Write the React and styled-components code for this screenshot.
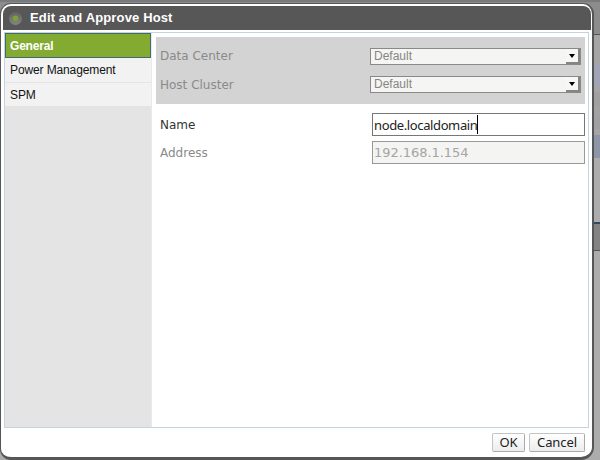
import React from "react";
import styled, { createGlobalStyle } from "styled-components";

const Global = createGlobalStyle`
  * { box-sizing: border-box; }
  body { margin: 0; overflow: hidden; background: #aaa; }
`;

const Stage = styled.div`
  position: relative;
  width: 600px;
  height: 460px;
  overflow: hidden;
`;

const Backdrop = styled.div`
  display: flex;
  flex-direction: column;
  height: 460px;
  background: #acacac;
`;

const Strip = styled.div`
  flex: 0 0 ${(p) => p.$h}px;
  background: ${(p) => p.$c};
`;

const Dialog = styled.section`
  position: absolute;
  left: 0;
  top: 3px;
  width: 594px;
  height: 457px;
  display: flex;
  flex-direction: column;
  padding: 2px 1px 0 2px;
  background: #fff;
  border: solid #565656;
  border-width: 1px 2px 3px 1px;
  border-radius: 11px 11px 13px 11px;
`;

const Header = styled.header`
  flex: 0 0 24px;
  display: flex;
  align-items: center;
  gap: 8px;
  padding-left: 6px;
  border-radius: 8px 8px 0 0;
  background: #575757;
  color: #fff;
  font: bold 13px/24px "Liberation Sans", sans-serif;
  letter-spacing: 0.14px;
`;

const Body = styled.div`
  display: flex;
  height: 396px;
  margin: 2px 2px 0 1px;
  border: 1px solid #c5d3db;
`;

const Sidebar = styled.nav`
  flex: 0 0 147px;
  background: #e4e4e4;
  border-right: 1px solid #e9e9e9;
`;

const Tab = styled.div`
  height: ${(p) => (p.$active ? 25 : 24.5)}px;
  padding-left: ${(p) => (p.$active ? 4 : 5)}px;
  border: ${(p) => (p.$active ? "1px solid #3f6a6e" : "0 solid #e4e4e4")};
  border-bottom-width: 1px;
  background: ${(p) => (p.$active ? "#83aa31" : "#f2f2f2")};
  color: ${(p) => (p.$active ? "#fff" : "#111")};
  font: ${(p) => (p.$active ? "bold" : "normal")} 12px/24px "Liberation Sans", sans-serif;
  letter-spacing: ${(p) => (p.$active ? -0.2 : -0.12)}px;
`;

const Content = styled.main`
  flex: 1;
  padding: 4px 3px 0 4px;
`;

const Group = styled.div`
  height: 67px;
  padding: 5px 4px 0 4px;
  background: #d3d3d3;
`;

const Fields = styled.div`
  padding: 7px 0 0 4px;
`;

const Row = styled.div`
  display: flex;
  align-items: flex-start;
  justify-content: space-between;
  height: 28px;
  padding-top: 6px;

  ${Fields} & { padding-top: 2px; }
`;

const Label = styled.label`
  margin-top: ${(p) => p.$drop}px;
  color: ${(p) => (p.$strong ? "#333" : "#8a8a8a")};
  font: 12px/16px "DejaVu Sans", sans-serif;
`;

const Select = styled.div`
  display: flex;
  justify-content: space-between;
  width: 211px;
  height: 17px;
  padding-left: 3px;
  border: 1px solid #898989;
  background: #f5f5f3;
  color: #858585;
  font: 12px/15px "Liberation Sans", sans-serif;
`;

const Arrow = styled.span`
  display: flex;
  align-items: center;
  justify-content: center;
  width: 14px;
  height: 15px;
  border: solid #858585;
  border-width: 0 2px 2px 0;
  background: #f7f7f5;
`;

const Field = styled.div`
  display: flex;
  align-items: center;
  width: 213px;
  height: 23px;
  padding-left: 1px;
  border: 1px solid ${(p) => (p.$disabled ? "#999" : "#777")};
  background: ${(p) => (p.$disabled ? "#f4f4f3" : "#fff")};
  color: ${(p) => (p.$disabled ? "#a5a5a5" : "#222")};
  font: 13px/20px ${(p) => (p.$disabled ? '"DejaVu Sans"' : '"Noto Sans"')}, sans-serif;
  letter-spacing: ${(p) => (p.$disabled ? -0.05 : -0.38)}px;
`;

const Caret = styled.i`
  width: 1px;
  height: 19px;
  background: #000;
`;

const Footer = styled.footer`
  display: flex;
  justify-content: flex-end;
  gap: 4px;
  padding: 5px 6px 0 0;
`;

const Button = styled.button`
  width: ${(p) => p.$w}px;
  height: 19px;
  padding: 0;
  border: 1px solid #c4c4c4;
  border-right-color: #aaa;
  border-bottom-color: #aaa;
  border-radius: 2px;
  background: linear-gradient(#fff, #ececec);
  color: #222;
  font: 13px/15px "Noto Sans", sans-serif;
  letter-spacing: -0.1px;
`;

const strips = [
  [2, "#777b7d"], [32, "#8c8c8c"], [1, "#555"], [29, "#a5a5a5"],
  [23, "#a0a4b4"], [5, "#a5a5a5"], [14, "#a0a0a0"], [9, "#a2a2a2"],
  [14, "#a0a0a2"], [6, "#a5a5a5"], [23, "#8c96a7"], [64, "#acacac"],
  [2, "#344766"], [26, "#838383"], [1, "#555"],
];

const Down = () => (
  <Arrow>
    <svg width="6" height="4" viewBox="0 0 6 4"><path d="M0 0h6L3 4z" fill="#000" /></svg>
  </Arrow>
);

export default function App() {
  return (
    <Stage>
      <Global />
      <Backdrop>
        {strips.map(([h, c], i) => <Strip key={i} $h={h} $c={c} />)}
      </Backdrop>
      <Dialog>
        <Header>
          <svg width="13" height="13" viewBox="0 0 13 13">
            <defs>
              <linearGradient id="disc" x2="0" y2="1">
                <stop stopColor="#626262" /><stop offset="1" stopColor="#858585" />
              </linearGradient>
            </defs>
            <circle cx="6.5" cy="6.5" r="6.5" fill="url(#disc)" />
            <circle cx="6.5" cy="6.2" r="2.8" fill="#7da232" />
          </svg>
          Edit and Approve Host
        </Header>
        <Body>
          <Sidebar>
            <Tab $active>General</Tab>
            <Tab>Power Management</Tab>
            <Tab>SPM</Tab>
          </Sidebar>
          <Content>
            <Group>
              <Row><Label $drop={0}>Data Center</Label><Select>Default<Down /></Select></Row>
              <Row><Label $drop={1}>Host Cluster</Label><Select>Default<Down /></Select></Row>
            </Group>
            <Fields>
              <Row><Label $strong $drop={4}>Name</Label><Field>node.localdomain<Caret /></Field></Row>
              <Row><Label $drop={4}>Address</Label><Field $disabled>192.168.1.154</Field></Row>
            </Fields>
          </Content>
        </Body>
        <Footer>
          <Button $w={33}>OK</Button>
          <Button $w={56}>Cancel</Button>
        </Footer>
      </Dialog>
    </Stage>
  );
}
